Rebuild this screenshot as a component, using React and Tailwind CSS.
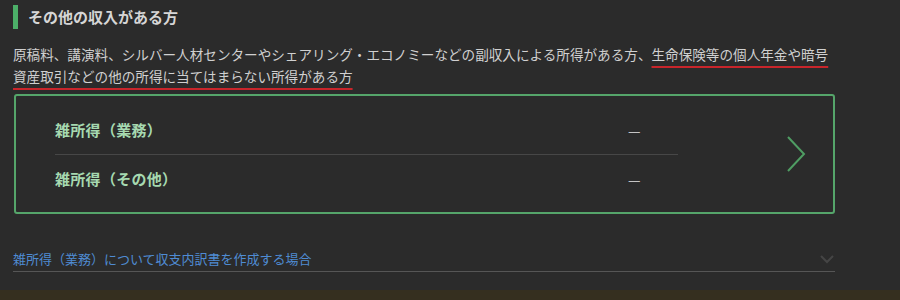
const font = { fontFamily: '"Noto Sans CJK JP", "Noto Sans", sans-serif' }

const IncomeRow = ({ label, divider }) => (
    <div className={`flex items-center h-[28px] ${divider ? 'pb-[10px] box-content border-b border-[#474747]' : 'pt-[10px] box-content'}`}>
        <span className="flex-1 text-[15px] font-bold text-[#a6d9b0] tracking-[0.3px]">{label}</span>
        <span className="w-[50px] text-[#c4c4c4] text-[14px] leading-none">—</span>
    </div>
)

export default function App() {
    return (
        <div className="w-[900px] h-[300px] bg-[#2b2b2b] flex flex-col overflow-hidden" style={font}>
            <div className="flex-1 pl-[13px] pt-[5px] w-[835px]">
                {/* heading */}
                <div className="flex items-center gap-[10px] h-[24px]">
                    <div className="w-[5px] h-[24px] bg-[#4caf68]" />
                    <h2 className="text-[15px] font-bold text-[#d6d6d6]">その他の収入がある方</h2>
                </div>

                <p className="mt-[14px] text-[13.6px] leading-[22px] text-[#d0d0d0] whitespace-nowrap">
                    原稿料、講演料、シルバー人材センターやシェアリング・エコノミーなどの副収入による所得がある方、
                    <span className="underline decoration-[#c8252b] decoration-2 underline-offset-[6px]">生命保険等の個人年金や暗号</span>
                    <br />
                    <span className="underline decoration-[#c8252b] decoration-2 underline-offset-[6px]">資産取引などの他の所得に当てはまらない所得がある方</span>
                </p>

                {/* income box */}
                <div className="mt-[7px] ml-[1px] h-[120px] border-2 border-[#55a56a] rounded-[3px] flex items-start">
                    <div className="w-[662px] pl-[39px] pt-[20px]">
                        <IncomeRow label="雑所得（業務）" divider />
                        <IncomeRow label="雑所得（その他）" />
                    </div>
                    <div className="flex-1 h-full flex items-center justify-end pr-[27px]">
                        <svg width="20" height="38" viewBox="0 0 20 38" fill="none">
                            <path d="M2 2 L18 19 L2 36" stroke="#4f9d63" strokeWidth="2" />
                        </svg>
                    </div>
                </div>

                {/* accordion link */}
                <div className="mt-[35px] flex items-start justify-between h-[23px] border-b border-[#565656]">
                    <span className="text-[13px] leading-[20px] text-[#4f8bd3]">雑所得（業務）について収支内訳書を作成する場合</span>
                    <svg width="14" height="9" viewBox="0 0 14 9" fill="none" className="mr-[1px] mt-[6px]">
                        <path d="M1 1 L7 7 L13 1" stroke="#454545" strokeWidth="2" />
                    </svg>
                </div>
            </div>
            <div className="h-[10px] bg-[#352f1f]" />
        </div>
    )
}
